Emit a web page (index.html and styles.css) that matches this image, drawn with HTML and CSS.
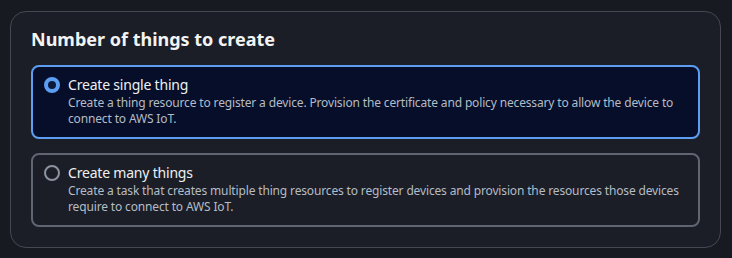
FILE: index.html
```html
<!DOCTYPE html>
<html lang="en">
<head>
    <meta charset="UTF-8">
    <meta name="viewport" content="width=device-width, initial-scale=1.0">
    <title>Number of things to create</title>
    <link rel="stylesheet" href="styles.css">
</head>
<body>
    <div class="panel">
        <h2>Number of things to create</h2>
        <div class="options">
            <label class="option selected">
                <span class="radio"></span>
                <span class="text">
                    <span class="label">Create single thing</span>
                    <span class="desc">Create a thing resource to register a device. Provision the certificate and policy necessary to allow the device to connect to AWS IoT.</span>
                </span>
            </label>
            <label class="option">
                <span class="radio"></span>
                <span class="text">
                    <span class="label">Create many things</span>
                    <span class="desc">Create a task that creates multiple thing resources to register devices and provision the resources those devices require to connect to AWS IoT.</span>
                </span>
            </label>
        </div>
    </div>
</body>
</html>
```

FILE: styles.css
```css
body {
    margin: 0;
    padding: 11px 11px 10px 10px;
    background: #171a21;
    font-family: "Noto Sans", "Open Sans", sans-serif;
    color: #e9ebed;
}
.panel {
    background: #1b1e26;
    border: 1px solid #434852;
    border-radius: 16px;
    padding: 15px 20px 20px 20px;
}
h2 {
    margin: 0 0 14px 0;
    font-size: 18px;
    line-height: 24px;
    font-weight: 700;
    color: #f2f3f3;
}
.options {
    display: flex;
    flex-direction: column;
    gap: 14px;
}
.option {
    display: flex;
    gap: 8px;
    border: 2px solid #5f6672;
    border-radius: 8px;
    padding: 8px 12px 10px 11px;
}
.option.selected {
    border-color: #5b9ef2;
    background: #060e29;
}
.radio {
    flex: none;
    box-sizing: border-box;
    width: 16px;
    height: 16px;
    margin-top: 2px;
    border: 2px solid #8d939e;
    border-radius: 50%;
}
.selected .radio {
    border: 4.5px solid #5b9ef2;
    background: #0b1a3c;
}
.text {
    display: flex;
    flex-direction: column;
}
.label {
    font-size: 14px;
    line-height: 20px;
    letter-spacing: -0.2px;
    color: #eef0f2;
}
.desc {
    font-size: 12px;
    line-height: 16px;
    letter-spacing: -0.15px;
    color: #b4bcc6;
}
```
